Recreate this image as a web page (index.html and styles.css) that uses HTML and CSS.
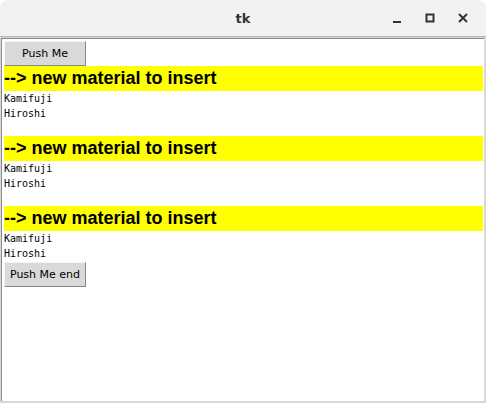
FILE: index.html
```html
<!DOCTYPE html>
<html lang="en">
<head>
    <meta charset="UTF-8">
    <title>tk</title>
    <link rel="stylesheet" href="styles.css">
</head>
<body>
    <div class="window">
        <div class="titlebar">
            <span class="title">tk</span>
            <div class="controls">
                <svg class="ctl" width="12" height="12" viewBox="0 0 12 12"><rect x="2" y="9" width="8" height="2" fill="#2e3436"/></svg>
                <svg class="ctl" width="12" height="12" viewBox="0 0 12 12"><rect x="2.5" y="2.5" width="7" height="7" fill="none" stroke="#2e3436" stroke-width="2"/></svg>
                <svg class="ctl" width="12" height="12" viewBox="0 0 12 12"><path d="M2 2 L10 10 M10 2 L2 10" stroke="#2e3436" stroke-width="2"/></svg>
            </div>
        </div>
        <div class="frame">
            <div class="text">
                <button class="tkbtn">Push Me</button>
                <div class="banner">--&gt; new material to insert</div>
                <div class="line">Kamifuji</div>
                <div class="line">Hiroshi</div>
                <div class="line"></div>
                <div class="banner">--&gt; new material to insert</div>
                <div class="line">Kamifuji</div>
                <div class="line">Hiroshi</div>
                <div class="line"></div>
                <div class="banner">--&gt; new material to insert</div>
                <div class="line">Kamifuji</div>
                <div class="line">Hiroshi</div>
                <button class="tkbtn end">Push Me end</button>
            </div>
        </div>
    </div>
</body>
</html>
```

FILE: styles.css
```css
html, body {
    margin: 0;
    padding: 0;
    background: #ffffff;
}
.window {
    width: 486px;
    height: 403px;
    display: flex;
    flex-direction: column;
    box-sizing: border-box;
}
.titlebar {
    height: 36px;
    flex: none;
    background: #f2f2f2;
    border-radius: 8px 8px 0 0;
    border-bottom: 1px solid #b6b6b6;
    position: relative;
    display: flex;
    align-items: center;
    justify-content: center;
}
.title {
    font-family: "DejaVu Sans", sans-serif;
    font-weight: bold;
    font-size: 13px;
    color: #2e3436;
}
.controls {
    position: absolute;
    right: 17px;
    top: 12px;
    display: flex;
    gap: 21px;
}
.frame {
    flex: 1;
    background: #d8d8d8;
    padding: 1px 2px 2px 1px;
    display: flex;
}
.text {
    flex: 1;
    background: #ffffff;
    border-left: 1px solid #8a8a8a;
    border-top: 1px solid #8a8a8a;
    padding: 2px 1px 0 2px;
    display: flex;
    flex-direction: column;
    align-items: flex-start;
}
.tkbtn {
    width: 82px;
    height: 25px;
    margin: 0;
    padding: 0;
    background: #d9d9d9;
    border: 1px solid;
    border-color: #f4f4f4 #888888 #888888 #f4f4f4;
    font-family: "DejaVu Sans", sans-serif;
    font-size: 11px;
    color: #000000;
}
.tkbtn.end {
    margin-top: 1px;
}
.banner {
    align-self: stretch;
    height: 25px;
    line-height: 25px;
    background: #ffff00;
    font-family: "Liberation Sans", Arial, sans-serif;
    font-weight: bold;
    font-size: 18px;
    color: #000000;
    white-space: nowrap;
}
.line {
    height: 15px;
    line-height: 15px;
    font-family: "DejaVu Sans Mono", monospace;
    font-size: 10px;
    color: #000000;
}
```
